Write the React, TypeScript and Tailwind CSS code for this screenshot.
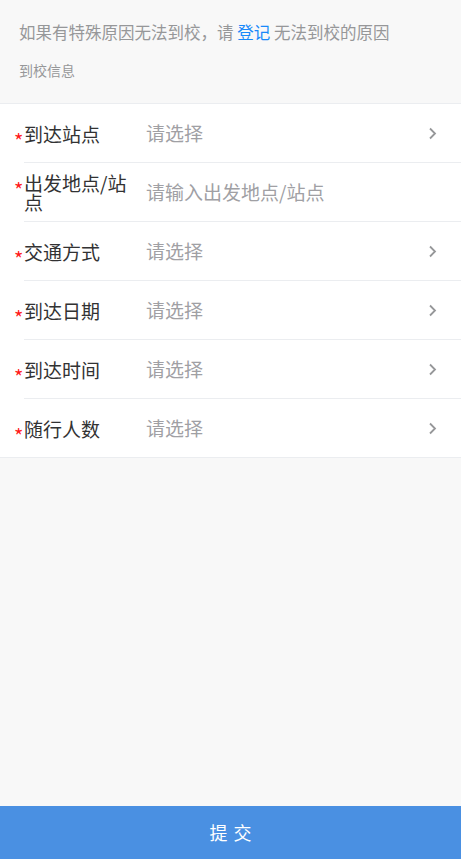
import React from "react";

const rows: { label: string; value: string; arrow: boolean }[] = [
  { label: "到达站点", value: "请选择", arrow: true },
  { label: "出发地点/站点", value: "请输入出发地点/站点", arrow: false },
  { label: "交通方式", value: "请选择", arrow: true },
  { label: "到达日期", value: "请选择", arrow: true },
  { label: "到达时间", value: "请选择", arrow: true },
  { label: "随行人数", value: "请选择", arrow: true },
];

function Chevron() {
  return (
    <svg width="9" height="13" viewBox="0 0 9 13" className="shrink-0">
      <polyline points="2,1.5 7,6.5 2,11.5" fill="none" stroke="#969799" strokeWidth="1.8" />
    </svg>
  );
}

export default function App() {
  return (
    <div
      className="flex h-[868px] w-full flex-col bg-[#f8f8f8]"
      style={{ fontFamily: '"Noto Sans CJK SC", "Noto Sans", sans-serif' }}
    >
      <div className="h-[103px] shrink-0 px-[19px]">
        <div className="pt-[20px] text-[16.5px] leading-[24px] text-[#969799]">
          如果有特殊原因无法到校，请 <span className="text-[#1989fa]">登记</span> 无法到校的原因
        </div>
        <div className="pt-[16px] text-[14px] leading-[20px] text-[#969799]">到校信息</div>
      </div>
      <div className="border-t border-b border-[#ebedf0] bg-white">
        {rows.map((r, i) => (
          <div key={i} className="pl-[24px]">
            <div
              className={
                "flex items-center pr-[24px] " +
                (i < rows.length - 1 ? "h-[59px] border-b border-[#ebedf0]" : "h-[58px]")
              }
            >
              <div className="relative w-[110px] shrink-0 text-[19px] leading-[19px] text-[#323233]">
                <span className="absolute left-[-10px] top-[7px] text-[20px] leading-[20px] text-[#ff1a1a]">*</span>
                {r.label}
              </div>
              <div className="ml-[12px] flex-1 text-[19px] leading-[24px] text-[#a0a0a4]">{r.value}</div>
              {r.arrow && <Chevron />}
            </div>
          </div>
        ))}
      </div>
      <div className="flex-1" />
      <div className="flex h-[53px] shrink-0 items-center justify-center bg-[#4a90e2] text-[18px] tracking-[6px] text-white">
        <span className="pl-[6px]">提交</span>
      </div>
      <div className="h-[9px] shrink-0 bg-white" />
    </div>
  );
}
